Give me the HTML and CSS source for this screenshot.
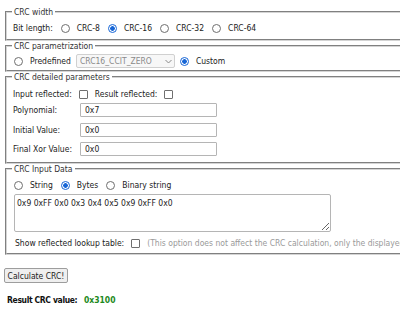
FILE: index.html
```html
<!DOCTYPE html>
<html>
<head>
  <title>CRC Calculator</title>
  <link rel="stylesheet" href="styles.css">
</head>
<body>
  <div class="pagina">
    <fieldset class="grupo grupo-largura">
      <legend>CRC width</legend>
      <div class="linha">
        <span>Bit length:</span>
        <label class="opcao"><input type="radio" name="largura" class="radio"> CRC-8</label>
        <label class="opcao"><input type="radio" name="largura" class="radio" checked> CRC-16</label>
        <label class="opcao"><input type="radio" name="largura" class="radio"> CRC-32</label>
        <label class="opcao"><input type="radio" name="largura" class="radio"> CRC-64</label>
      </div>
    </fieldset>

    <fieldset class="grupo grupo-param">
      <legend>CRC parametrization</legend>
      <div class="linha linha-select">
        <label class="opcao primeira"><input type="radio" name="param" class="radio"> Predefined</label>
        <div class="select-box">
          <select class="select" disabled>
            <option>CRC16_CCIT_ZERO</option>
          </select>
          <svg class="seta" width="7" height="5" viewBox="0 0 7 5"><path d="M0.5 1 L3.5 4 L6.5 1" fill="none" stroke="#8a8a8a" stroke-width="1"/></svg>
        </div>
        <label class="opcao"><input type="radio" name="param" class="radio" checked> Custom</label>
      </div>
    </fieldset>

    <fieldset class="grupo grupo-detalhe">
      <legend>CRC detailed parameters</legend>
      <div class="linha">
        <span>Input reflected:</span>
        <input type="checkbox" class="check">
        <span>Result reflected:</span>
        <input type="checkbox" class="check">
      </div>
      <div class="linha campo campo-poly">
        <span class="rotulo">Polynomial:</span>
        <input type="text" class="texto" value="0x7">
      </div>
      <div class="linha campo campo-init">
        <span class="rotulo">Initial Value:</span>
        <input type="text" class="texto" value="0x0">
      </div>
      <div class="linha campo campo-xor">
        <span class="rotulo">Final Xor Value:</span>
        <input type="text" class="texto" value="0x0">
      </div>
    </fieldset>

    <fieldset class="grupo grupo-entrada">
      <legend>CRC Input Data</legend>
      <div class="linha">
        <label class="opcao primeira"><input type="radio" name="tipo" class="radio"> String</label>
        <label class="opcao"><input type="radio" name="tipo" class="radio" checked> Bytes</label>
        <label class="opcao"><input type="radio" name="tipo" class="radio"> Binary string</label>
      </div>
      <textarea class="dados">0x9 0xFF 0x0 0x3 0x4 0x5 0x9 0xFF 0x0</textarea>
      <div class="linha linha-tabela">
        <span>Show reflected lookup table:</span>
        <input type="checkbox" class="check">
        <span class="nota">(This option does not affect the CRC calculation, only the displayed lookup table)</span>
      </div>
    </fieldset>

    <button class="botao">Calculate CRC!</button>

    <div class="resultado">
      <span class="rotulo-resultado">Result CRC value:</span>
      <span class="valor">0x3100</span>
    </div>
  </div>
</body>
</html>
```

FILE: styles.css
```css
html, body {
  overflow: hidden;
}

body {
  font-family: "DejaVu Sans Condensed", "DejaVu Sans", sans-serif;
  font-size: 8.5px;
  color: #222;
  margin: 0;
  background: #fff;
}

.pagina {
  width: 640px;
  padding: 7px 0 0 3px;
}

.grupo {
  margin: 0 2px;
  padding: 0 8px 4px 6px;
  border: 2px groove #d4d4d4;
}

.grupo legend {
  padding: 0 2px;
  margin-left: -1px;
  line-height: 10px;
  color: #333;
}

.linha {
  display: flex;
  align-items: center;
  height: 14px;
  white-space: nowrap;
}

.grupo-largura .linha {
  margin-top: 4px;
}

.grupo-param {
  padding-bottom: 1px;
}

.linha-select {
  height: 16px;
  margin-top: 2px;
}

.opcao {
  display: flex;
  align-items: center;
  margin-left: 8px;
}

.opcao.primeira {
  margin-left: 1px;
}

.radio {
  appearance: none;
  width: 9px;
  height: 9px;
  margin: 0 7px 0 0;
  border: 1px solid #6f6f6f;
  border-radius: 50%;
  background: #fff;
}

.radio:checked {
  border-color: #1766d6;
  background: radial-gradient(circle, #1766d6 0 2px, #fff 2.6px);
}

.check {
  appearance: none;
  width: 9px;
  height: 9px;
  margin: 0 7px;
  border: 1px solid #6f6f6f;
  border-radius: 1px;
  background: #fff;
}

.select-box {
  position: relative;
  margin-left: 5px;
}

.select {
  appearance: none;
  display: block;
  width: 99px;
  height: 14px;
  padding: 0 0 0 3px;
  font-family: inherit;
  font-size: 8.5px;
  color: #8a8a8a;
  background: #f7f7f7;
  border: 1px solid #d0d0d0;
  border-radius: 2px;
  opacity: 1;
}

.seta {
  position: absolute;
  right: 3px;
  top: 5px;
}

.grupo-param .opcao:last-child {
  margin-left: 5px;
}

.grupo-detalhe {
  padding-bottom: 6px;
}

.grupo-detalhe .linha:first-of-type {
  margin-top: 5px;
}

.campo-poly {
  margin-top: 2px;
}

.campo-init {
  margin-top: 6px;
}

.campo-xor {
  margin-top: 5px;
}

.rotulo {
  width: 67px;
}

.texto {
  width: 137px;
  height: 14px;
  box-sizing: border-box;
  padding: 0 4px;
  margin: 0;
  font-family: inherit;
  font-size: 8.5px;
  color: #222;
  border: 1px solid #b5b5b5;
  border-radius: 1px;
}

.grupo-entrada {
  padding-bottom: 3px;
}

.grupo-entrada .linha:first-of-type {
  margin-top: 4px;
}

.dados {
  display: block;
  width: 317px;
  height: 38px;
  box-sizing: border-box;
  margin: 2px 0 0 1px;
  padding: 3px 2px;
  font-family: inherit;
  font-size: 8.5px;
  color: #222;
  border: 1px solid #b5b5b5;
  border-radius: 2px;
}

.linha-tabela {
  margin-top: 4px;
  padding-left: 2px;
}

.nota {
  color: #9a9a9a;
}

.botao {
  display: block;
  margin: 13px 0 0 1px;
  width: 64px;
  height: 15px;
  padding: 0;
  font-family: inherit;
  font-size: 8.5px;
  color: #222;
  background: #efefef;
  border: 1px solid #9d9d9d;
  border-radius: 2px;
}

.resultado {
  margin: 12px 0 0 4px;
  line-height: 10px;
  font-weight: bold;
  color: #111;
}

.rotulo-resultado {
  letter-spacing: -0.35px;
}

.valor {
  margin-left: 4px;
  color: #1d8a1d;
}
```
